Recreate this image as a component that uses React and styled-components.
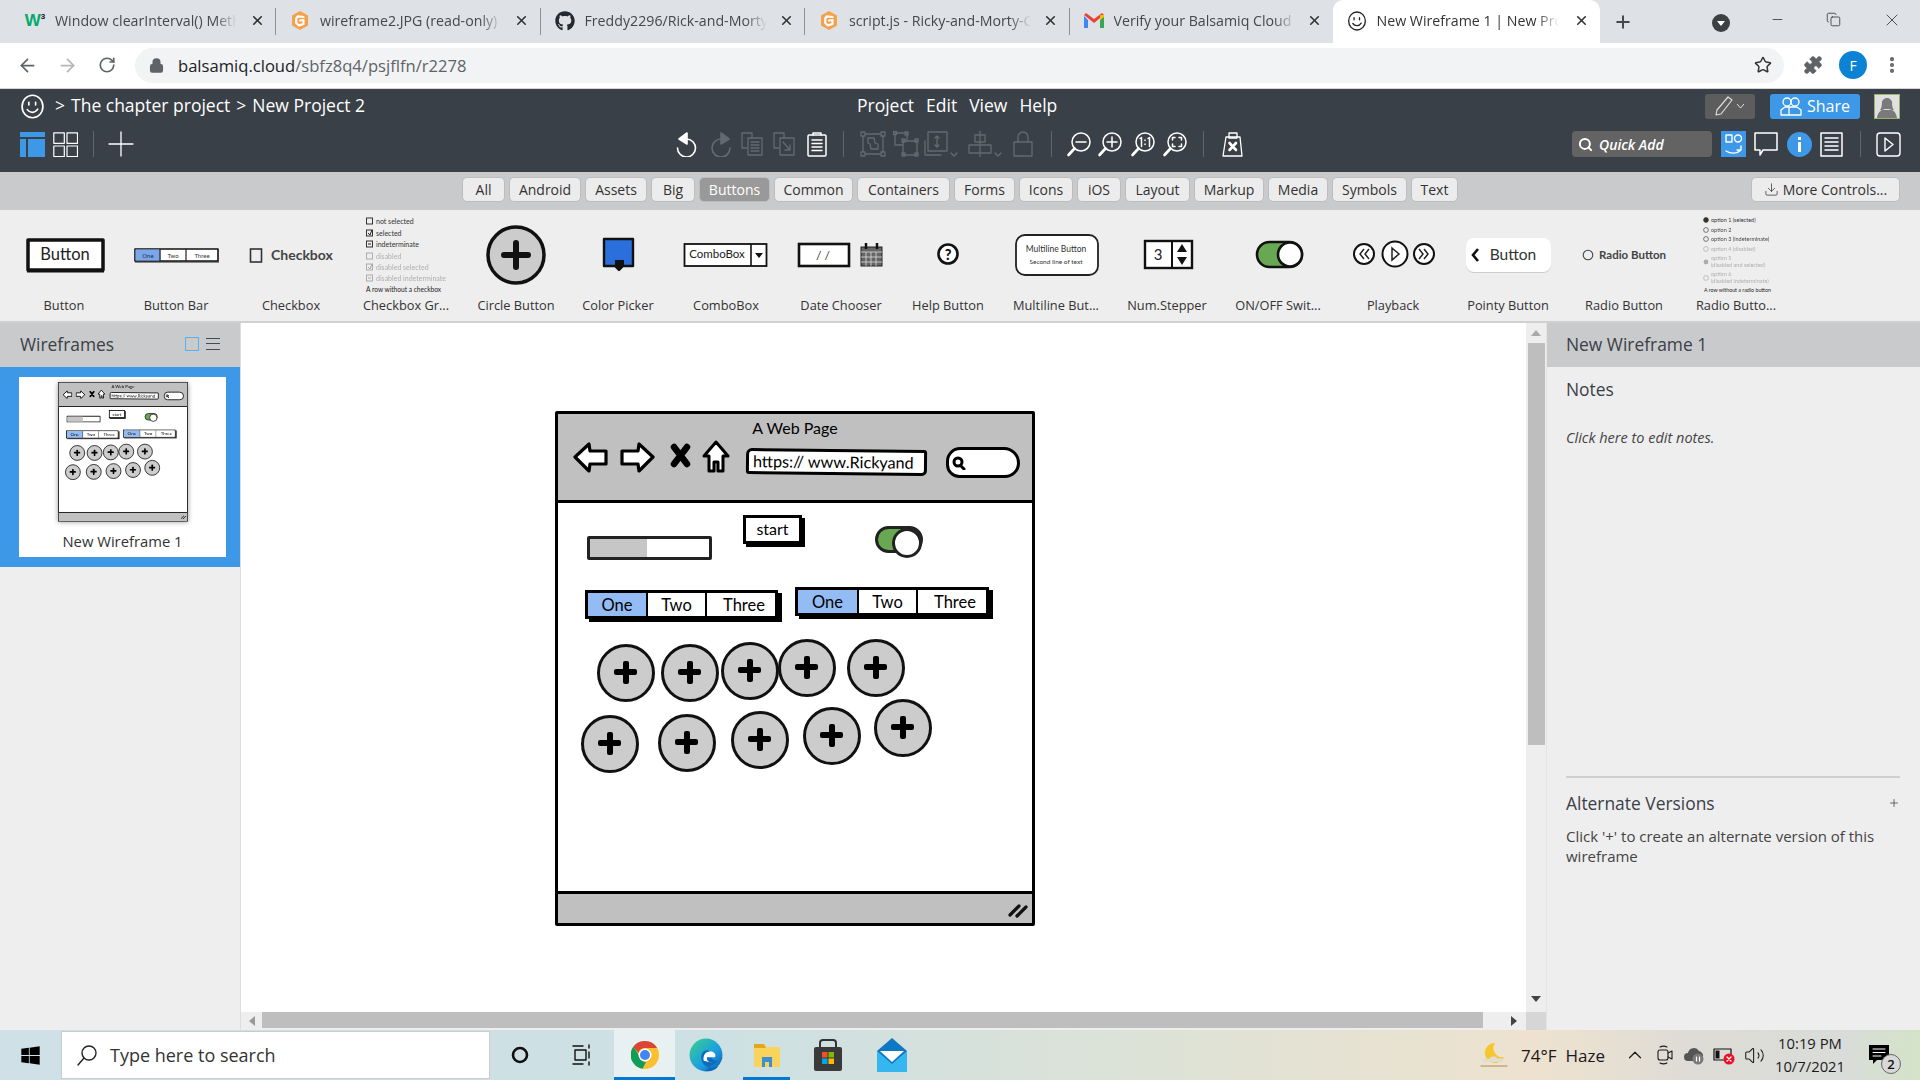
import React from 'react';
import styled, { createGlobalStyle } from 'styled-components';
import { ArrowLeft, ArrowRight, RotateCw, Lock, Star, Puzzle, EllipsisVertical, X, Plus, Minus, Copy, Search, ChevronUp, Volume2, Download } from 'lucide-react';
import { FaGithub, FaWindows } from 'react-icons/fa';

const UI = '"Open Sans", "Noto Sans", sans-serif';
const SK = 'Lato, "Open Sans", sans-serif';

const Global = createGlobalStyle`
  html, body { margin: 0; padding: 0; width: 1920px; height: 1080px; overflow: hidden; }
  body { font-family: ${UI}; background: #fff; }
  * { box-sizing: border-box; }
  svg { display: block; }
`;

const Page = styled.div`
  width: 1920px; height: 1080px; display: flex; flex-direction: column; overflow: hidden;
`;

/* Browser chrome */
const TabStrip = styled.div`
  height: 43px; background: #dee1e6; display: flex; align-items: stretch; padding-left: 11px; flex-shrink: 0;
`;
const Tab = styled.div`
  width: ${p => p.$w || 264}px; position: relative; display: flex; align-items: center; padding-left: 14px; padding-bottom: 2px;
  background: ${p => p.$active ? '#fff' : 'transparent'};
  border-radius: ${p => p.$active ? '10px 10px 0 0' : '0'};
  border-right: ${p => p.$sep ? '1px solid #8d9095' : '0'};
  ${p => p.$sep ? 'border-image: linear-gradient(#dee1e6 20%, #8d9095 20%, #8d9095 80%, #dee1e6 80%) 1;' : ''}
`;
const Favicon = styled.span`
  width: 20px; height: 20px; display: flex; align-items: center; justify-content: center; flex-shrink: 0;
`;
const W3 = styled.span`
  font: bold 17px "Liberation Sans", sans-serif; color: #04aa6d; line-height: 20px;
  sup { font-size: 8px; color: #111; vertical-align: top; line-height: 12px; }
`;
const TabTitle = styled.span`
  margin-left: 10px; width: 182px; font-size: 14.2px; color: ${p => p.$active ? '#333' : '#45484c'}; white-space: nowrap; overflow: hidden;
  -webkit-mask-image: linear-gradient(90deg, #000 88%, transparent 100%);
  mask-image: linear-gradient(90deg, #000 88%, transparent 100%);
`;
const TabClose = styled.span`
  width: 16px; display: flex; justify-content: center; margin-left: auto; margin-right: 10px; color: #333;
`;
const NewTab = styled.div`
  width: 52px; margin-left: -3px; display: flex; align-items: center; justify-content: center; color: #45484c;
`;
const WinControls = styled.div`
  margin-left: auto; display: flex; align-items: center; color: #333; padding-right: 18px; height: 39px;
`;
const Ctl = styled.div`
  width: ${p => p.$w}px; margin-left: ${p => p.$m || 0}px; margin-top: ${p => p.$t || 0}px; display: flex; justify-content: center; flex-shrink: 0;
`;
const AddressRow = styled.div`
  height: 46px; background: #fff; border-bottom: 1px solid #d3d5d8; display: flex; align-items: center; flex-shrink: 0; padding: 0 0 1px 7px;
`;
const NavBtn = styled.div`
  width: 40px; display: flex; justify-content: center; color: ${p => p.$dim ? '#b4b6b9' : '#5f6368'};
`;
const UrlPill = styled.div`
  margin-left: 8px; width: 1649px; height: 35px; background: #f1f3f4; border-radius: 18px; display: flex; align-items: center; padding: 0 12px 0 14px; color: #5f6368; font-size: 16.6px;
`;
const UrlHost = styled.span` color: #202124; margin-left: 14px; `;
const StarBox = styled.span` margin-left: auto; color: #333; `;
const ProfileDot = styled.div`
  width: 28px; height: 28px; border-radius: 50%; background: #0b82d4; color: #fff; font-size: 14px; display: flex; align-items: center; justify-content: center; margin-left: 16px;
`;
const AddrRight = styled.div`
  display: flex; align-items: center; margin-left: 19px; color: #5f6368;
`;
const DotsBox = styled.span` margin-left: 15px; `;

/* Balsamiq header */
const AppHeader = styled.div`
  height: 83px; background: #3a4047; color: #fff; flex-shrink: 0; display: flex; flex-direction: column;
`;
const HeadRow = styled.div`
  height: 34px; padding-bottom: 2px; display: grid; grid-template-columns: 857px auto 1fr; align-items: center;
`;
const Crumbs = styled.div`
  display: flex; align-items: center; padding-left: 20px; font-size: 17.5px; gap: 6px;
`;
const SmileBox = styled.span` margin: 2px 4px 0 0; `;
const Menu = styled.div`
  display: flex; gap: 12px; font-size: 17.5px;
`;
const HeadRight = styled.div`
  display: flex; align-items: center; justify-content: flex-end; padding-right: 20px; padding-top: 2px;
`;
const PenBtn = styled.div`
  width: 50px; height: 25px; background: #5d5d5d; border-radius: 3px; display: flex; align-items: center; justify-content: center; gap: 3px; color: #ddd;
`;
const ShareBtn = styled.div`
  width: 90px; height: 25px; margin-left: 15px; background: #3d99e8; border-radius: 3px; display: flex; align-items: center; justify-content: center; gap: 5px; font-size: 16px; color: #fff;
`;
const Avatar = styled.div`
  width: 26px; height: 25px; margin-left: 14px; background: #e0e0e0; border: 1px solid #9ab36f; overflow: hidden;
`;
const ToolRow = styled.div`
  height: 42px; display: grid; grid-template-columns: 670px auto 1fr; align-items: center;
`;
const ToolGroup = styled.div`
  display: flex; align-items: center; ${p => p.$end ? 'justify-content: flex-end; padding-right: 17px;' : ''}
  ${p => p.$pad ? `padding-left: ${p.$pad}px;` : ''}
`;
const Slot = styled.div`
  width: ${p => p.$w}px; display: flex; justify-content: center; align-items: center; color: ${p => p.$dim ? '#636a71' : '#fff'};
`;
const VDiv = styled.div`
  width: ${p => p.$w}px; height: 26px; position: relative; display: flex; justify-content: center;
  &::after { content: ''; width: 1px; height: 100%; background: #5f666d; }
`;
const QuickAdd = styled.div`
  width: 140px; height: 26px; background: #636363; border-radius: 4px; display: flex; align-items: center; padding-left: 6px; gap: 6px; font-size: 14px; font-style: italic; font-weight: 600; color: #fff; margin-right: 5px;
`;

/* filter tags */
const FilterBar = styled.div`
  height: 38px; background: #c9cacc; display: flex; align-items: center; padding-left: 462px; gap: 4px; flex-shrink: 0; padding-bottom: 3px;
`;
const Tag = styled.div`
  width: ${p => p.$w}px; height: 25px; border-radius: 5px; border: 1px solid #bcbdbf; background: ${p => p.$on ? '#999' : '#ececec'}; color: ${p => p.$on ? '#fff' : '#333'}; font-size: 14px; display: flex; align-items: center; justify-content: center; white-space: nowrap; gap: 4px;
`;
const TagEnd = styled(Tag)` margin-left: auto; margin-right: 20px; `;

/* library */
const Library = styled.div`
  height: 113px; background: #eee; border-bottom: 2px solid #d0d0d0; display: flex; padding-left: 10px; flex-shrink: 0;
`;
const LibItem = styled.div`
  width: ${p => p.$w}px; display: flex; flex-direction: column; align-items: center; flex-shrink: 0; padding-top: 2px;
`;
const LibLabel = styled.div`
  font-size: 12.8px; color: #333; line-height: 18px; margin-top: -2px; white-space: nowrap;
`;

/* main */
const Main = styled.div`
  flex: 1; display: grid; grid-template-columns: 241px 1fr 374px; min-height: 0;
`;
const Sidebar = styled.div`
  background: #eee; border-right: 1px solid #ddd; display: flex; flex-direction: column;
`;
const PanelHead = styled.div`
  height: 44px; background: #c9cacc; display: flex; align-items: center; padding: 0 20px 2px ${p => p.$left || 20}px; font-size: 17.4px; color: #3a4047;
`;
const HeadIcons = styled.div`
  margin-left: auto; display: flex; align-items: center; gap: 7px;
`;
const SquareIco = styled.div`
  width: 14px; height: 14px; border: 1px solid #5ab0f0;
`;
const Burger = styled.div`
  width: 14px; height: 12px; border-top: 1.5px solid #454b52; border-bottom: 1.5px solid #454b52; position: relative;
  &::after { content: ''; position: absolute; left: 0; right: 0; top: 3.5px; height: 1.5px; background: #454b52; }
`;
const Selected = styled.div`
  height: 200px; background: #3d99e8; padding: 10px 14px 10px 19px;
`;
const ThumbCard = styled.div`
  height: 180px; background: #fff; display: flex; flex-direction: column; align-items: center; padding-top: 5px;
`;
const ThumbBox = styled.div`
  width: 130px; height: 139px; box-shadow: 0 1px 5px rgba(0,0,0,.4);
`;
const ThumbScale = styled.div`
  width: 480px; transform: scale(.2708); transform-origin: 0 0; filter: blur(.9px);
`;
const ThumbLabel = styled.div`
  margin-top: 10px; font-size: 14.8px; color: #333;
`;
const CanvasArea = styled.div`
  display: grid; grid-template-columns: 1fr 20px; grid-template-rows: 1fr 18px; min-height: 0; background: #fff;
`;
const Canvas = styled.div`
  padding: 88px 0 0 314px; overflow: hidden; background: #fff;
`;
const VScroll = styled.div`
  background: #eee; display: flex; flex-direction: column; align-items: center; padding: 0 1px 4px;
`;
const HScroll = styled.div`
  background: #eee; display: flex; align-items: center; padding-right: 3px;
`;
const ThumbV = styled.div`
  width: 17px; height: 402px; background: #bebebe;
`;
const ThumbH = styled.div`
  width: 1221px; height: 16px; background: #bebebe; margin-top: -2px;
`;
const ArrowBox = styled.div`
  width: ${p => p.$w}px; height: ${p => p.$h}px; display: flex; align-items: center; justify-content: center; flex-shrink: 0;
  ${p => p.$auto ? 'margin-top: auto;' : ''} ${p => p.$autoL ? 'margin-left: auto;' : ''}
`;
const Corner = styled.div` background: #d6d6d6; `;
const RightPanel = styled.div`
  background: #eee; display: flex; flex-direction: column; border-left: 1px solid #e4e4e4;
`;
const NotesSec = styled.div`
  height: 409px; padding: 0 19px; flex-shrink: 0;
`;
const SecTitle = styled.div`
  font-size: 17.4px; color: #3a4047; line-height: 26px; display: flex; justify-content: space-between; align-items: center;
`;
const NoteTitle = styled(SecTitle)` margin-top: 9px; `;
const NoteHint = styled.div`
  font-size: 14.5px; font-style: italic; color: #444; margin-top: 26px; line-height: 20px;
`;
const AltSec = styled.div`
  margin: 0 20px 0 19px; border-top: 2px solid #cfcfcf; padding-top: 12px;
`;
const AltText = styled.div`
  font-size: 15px; color: #444; line-height: 20px; margin-top: 10px; width: 334px;
`;

/* the wireframe */
const Frame = styled.div`
  width: 480px; height: 515px; border: 3px solid #000; border-radius: 2px; background: #fff; position: relative; display: flex; flex-direction: column; font-family: ${SK}; color: #000;
`;
const TitleBar = styled.div`
  height: 89px; background: #c0c0c0; border-bottom: 3.5px solid #000; text-align: center; font-size: 16px; line-height: 20px; padding-top: 4px;
`;
const WBody = styled.div` flex: 1; `;
const StatusBar = styled.div`
  height: 32px; background: #c0c0c0; border-top: 3px solid #000; display: flex; justify-content: flex-end; align-items: center; padding: 2px 4px 0 0;
`;
const Node = styled.div`
  position: absolute; left: ${p => p.$x}px; top: ${p => p.$y}px;
`;
const UrlBox = styled(Node)`
  width: 181px; height: 26px; background: #fff; border: 3px solid #000; border-radius: 6px 3px 5px 3px; font-size: 16.2px; line-height: 19px; padding-left: 4px; white-space: nowrap; overflow: hidden; transform: rotate(.6deg);
`;
const SearchPill = styled(Node)`
  width: 74px; height: 31px; background: #fff; border: 3.5px solid #000; border-radius: 16px 18px 17px 15px; display: flex; align-items: center; padding-left: 3px;
`;
const Progress = styled(Node)`
  width: 125px; height: 24px; border: 3px solid #222; border-radius: 2px; background: #fff;
  &::before { content: ''; display: block; height: 100%; width: 48%; background: #c6c6c6; }
`;
const StartBtn = styled(Node)`
  width: 59px; height: 29px; background: #fff; border: 3px solid #000; box-shadow: 3px 3px 0 #000; font-size: 16px; display: flex; align-items: center; justify-content: center; padding-bottom: 3px;
`;
const Toggle = styled(Node)`
  width: 48px; height: 27px; border: 3px solid #222; border-radius: 14px; background: #68a853; display: flex; justify-content: flex-end;
  &::after { content: ''; width: 24px; height: 24px; margin: -1.5px -2px 0 0; border: 3px solid #222; border-radius: 50%; background: #fff; }
`;
const BBar = styled(Node)`
  width: ${p => p.$w}px; height: 29px; display: flex; border: 3px solid #000; background: #fff; box-shadow: 4px 3px 0 #000; font-size: 16.5px;
`;
const BSeg = styled.div`
  flex: ${p => p.$grow ? 1 : `0 0 ${p.$w}px`}; background: ${p => p.$on ? '#94bcf4' : '#fff'}; border-right: ${p => p.$grow ? 0 : 2}px solid #000; display: flex; align-items: center; justify-content: center; line-height: 1; padding: 2px 0 0 ${p => p.$grow ? 6 : 0}px;
`;
const CircleBtn = styled(Node)`
  width: 58px; height: 58px; border: 3.5px solid #111; border-radius: 50%; background: #ccc;
  &::before, &::after { content: ''; position: absolute; background: #000; border-radius: 2px; }
  &::before { left: 14px; top: 22px; width: 23px; height: 6px; }
  &::after { left: 22.5px; top: 13.5px; width: 6px; height: 23px; }
`;

const Ico = ({ s = 24, w, h, vb, sw = 1.5, fill = 'none', stroke = 'currentColor', children }) => (
  <svg width={w || s} height={h || s} viewBox={vb || `0 0 ${w || s} ${h || s}`} fill={fill} stroke={stroke} strokeWidth={sw} strokeLinecap="round" strokeLinejoin="round">{children}</svg>
);

const Smiley = ({ s = 22, c = '#fff' }) => (
  <Ico s={s} vb="0 0 24 24" sw={1.6} stroke={c}>
    <ellipse cx="12" cy="12" rx="10" ry="10.8" />
    <path d="M8.5 8v2.5M15 8v2.5M7 15c2.5 3.5 7.5 3.5 10 -.5" />
  </Ico>
);
const GFav = () => (
  <Ico s={21} vb="0 0 20 20" sw={0}>
    <path d="M10 .5 18 5v10l-8 4.5L2 15V5z" fill="#f5a04a" />
    <path d="M13.5 6.5 8 5.8 6.2 8v4.5L9 15l4.5-1.6V9.5L10 10" fill="none" stroke="#fff" strokeWidth="2.2" />
  </Ico>
);
const Gmail = () => (
  <Ico w={20} h={16} vb="0 0 20 16" sw={0}>
    <path d="M0 3v12h4V7z" fill="#4285f4" /><path d="M20 3v12h-4V7z" fill="#34a853" />
    <path d="M0 2l10 8 10-8-2-2-8 6-8-6z" fill="#ea4335" /><path d="M16 2l4 0v2l-4 3z" fill="#fbbc05" />
  </Ico>
);

const tabs = [
  ['w3', 'Window clearInterval() Method'],
  ['g', 'wireframe2.JPG (read-only) - Goo'],
  ['gh', 'Freddy2296/Rick-and-Morty-App'],
  ['g', 'script.js - Ricky-and-Morty-Game'],
  ['gm', 'Verify your Balsamiq Cloud account'],
];
const fav = k => k === 'w3' ? <W3>W<sup>3</sup></W3> : k === 'g' ? <GFav /> : k === 'gh' ? <FaGithub size={20} color="#24292e" /> : <Gmail />;

const filters = [['All',43],['Android',72],['Assets',62],['Big',44],['Buttons',71],['Common',79],['Containers',93],['Forms',61],['Icons',54],['iOS',44],['Layout',65],['Markup',70],['Media',60],['Symbols',75],['Text',47]];

const P = ({ x, w, children }) => (
  <svg width={w} height={86} viewBox={`${x} 212 ${w} 86`} fontFamily={SK}>{children}</svg>
);
const Sk = { stroke: '#111', strokeLinejoin: 'round' };

const libs = [
  ['Button', 10, 108, <>
    <rect x="28" y="240" width="75" height="30" fill="#fff" {...Sk} strokeWidth="3.5" />
    <path d="M27 271h77" stroke="#111" strokeWidth="3" />
    <text x="65" y="260" fontSize="16.5" textAnchor="middle" fill="#222">Button</text></>],
  ['Button Bar', 118, 116, <>
    <rect x="135" y="249" width="83" height="12" fill="#fff" {...Sk} strokeWidth="1.6" />
    <rect x="135.5" y="249.5" width="25" height="11" fill="#79a7ea" />
    <path d="M160 249v12M186 249v12M135 262h84" stroke="#222" strokeWidth="1.2" />
    <text x="148" y="258" fontSize="6" textAnchor="middle" fill="#234">One</text>
    <text x="173" y="258" fontSize="6" textAnchor="middle" fill="#333">Two</text>
    <text x="202" y="258" fontSize="6" textAnchor="middle" fill="#333">Three</text></>],
  ['Checkbox', 234, 114, <>
    <rect x="250.5" y="249" width="11" height="13" fill="#eee" stroke="#333" strokeWidth="1.6" />
    <text x="271" y="260" fontSize="14" fontWeight="700" fill="#444">Checkbox</text></>],
  ['Checkbox Gr...', 348, 116, <>
    {[['not selected',221,1],['selected',233,1],['indeterminate',244,1],['disabled',256,.35],['disabled selected',267,.35],['disabled indeterminate',278,.35]].map(([t,y,o]) => (
      <g key={t} opacity={o}>
        <rect x="366.5" y={y-3} width="6" height="6" fill="none" stroke="#333" />
        {t.includes('selected') && t !== 'not selected' && <path d={`M368 ${y}l2 2 2-5`} stroke="#222" fill="none" />}
        {t.includes('indeterm') && <path d={`M368 ${y}h3`} stroke="#222" />}
        <text x="376" y={y+2.5} fontSize="7" fill="#333">{t}</text>
      </g>
    ))}
    <text x="366" y="291.5" fontSize="6.6" fill="#222">A row without a checkbox</text></>],
  ['Circle Button', 464, 104, <>
    <circle cx="516" cy="255" r="28" fill="#ccc" stroke="#111" strokeWidth="3.5" />
    <path d="M504 255h24M516 243v24" stroke="#111" strokeWidth="6" strokeLinecap="round" /></>],
  ['Color Picker', 568, 100, <>
    <path d="M604 239h29v27h-10l-4 4-4-4h-11z" fill="#2a6fdb" stroke="#111" strokeWidth="2.4" strokeLinejoin="round" />
    <path d="M615 260h9v6l-4 4-5-4z" fill="#111" /></>],
  ['ComboBox', 668, 116, <>
    <rect x="684.5" y="244" width="82" height="22" fill="#fff" stroke="#111" strokeWidth="1.8" />
    <path d="M751 244v22" stroke="#111" strokeWidth="1.6" />
    <path d="M755 253h8l-4 5z" fill="#111" />
    <text x="717" y="258" fontSize="11.5" textAnchor="middle" fill="#222">ComboBox</text></>],
  ['Date Chooser', 784, 114, <>
    <rect x="799" y="244" width="50" height="22" fill="#fff" stroke="#111" strokeWidth="2.6" />
    <text x="816" y="260" fontSize="12" fill="#333">/ /</text>
    <rect x="861" y="247" width="21" height="19" fill="#666" stroke="#222" />
    <path d="M861 252h21M866 252v14M871 252v14M876 252v14M861 257h21M861 262h21" stroke="#ddd" strokeWidth=".8" />
    <path d="M866 243v6M877 243v6" stroke="#111" strokeWidth="2.5" /></>],
  ['Help Button', 898, 100, <>
    <circle cx="948" cy="254" r="9.5" fill="#fff" stroke="#111" strokeWidth="2.6" />
    <text x="948" y="259.5" fontSize="14.5" fontWeight="900" textAnchor="middle" fill="#111">?</text></>],
  ['Multiline But...', 998, 116, <>
    <rect x="1016" y="235" width="82" height="40" rx="9" fill="#fff" stroke="#222" strokeWidth="1.8" />
    <text x="1056" y="252" fontSize="8.5" textAnchor="middle" fill="#333">Multiline Button</text>
    <text x="1056" y="264" fontSize="6.5" textAnchor="middle" fill="#333">Second line of text</text></>],
  ['Num.Stepper', 1114, 106, <>
    <rect x="1145" y="241" width="47" height="27" fill="#fff" stroke="#111" strokeWidth="2.4" />
    <path d="M1172 241v27" stroke="#111" strokeWidth="2" />
    <path d="M1182 244l5 8h-10zM1182 265l5-8h-10z" fill="#111" />
    <text x="1158" y="260" fontSize="15" textAnchor="middle" fill="#222">3</text></>],
  ['ON/OFF Swit...', 1220, 116, <>
    <rect x="1257" y="242" width="45" height="25" rx="12.5" fill="#68a853" stroke="#111" strokeWidth="2.6" />
    <circle cx="1290" cy="254.5" r="12" fill="#fff" stroke="#111" strokeWidth="2.6" /></>],
  ['Playback', 1336, 114, <>
    <circle cx="1364" cy="254" r="10" fill="#fff" stroke="#111" strokeWidth="2" />
    <circle cx="1395" cy="254" r="12.5" fill="#fff" stroke="#111" strokeWidth="2" />
    <circle cx="1424" cy="254" r="10" fill="#fff" stroke="#111" strokeWidth="2" />
    <path d="M1364 249l-4 5 4 5M1369 249l-4 5 4 5M1392 248l7 6-7 6zM1419 249l4 5-4 5M1424 249l4 5-4 5" fill="none" stroke="#222" strokeWidth="1.5" /></>],
  ['Pointy Button', 1450, 116, <>
    <rect x="1466" y="239" width="85" height="34" rx="8" fill="#ccc" />
    <rect x="1466" y="238" width="85" height="34" rx="8" fill="#fff" />
    <path d="M1478 249l-5 6 5 6" fill="none" stroke="#111" strokeWidth="2.6" />
    <text x="1513" y="260" fontSize="15.5" textAnchor="middle" fill="#333">Button</text></>],
  ['Radio Button', 1566, 116, <>
    <circle cx="1588" cy="255" r="4.8" fill="none" stroke="#444" strokeWidth="1.1" />
    <text x="1599" y="259" fontSize="11.5" fontWeight="700" fill="#444">Radio Button</text></>],
  ['Radio Butto...', 1682, 108, <>
    {[['option 1 (selected)',220,1],['option 2',230,.9],['option 3 (indeterminate)',239,.9],['option 4 (disabled)',249,.35]].map(([t,y,o]) => (
      <g key={t} opacity={o}><circle cx="1706" cy={y} r="2.4" fill={y === 220 ? '#333' : 'none'} stroke="#333" strokeWidth=".7" />
      <text x="1711" y={y+2} fontSize="5.5" fill="#333">{t}</text></g>
    ))}
    <g opacity=".35"><circle cx="1706" cy="262" r="2.4" fill="#333" /><text x="1711" y="260" fontSize="5.5" fill="#333">option 5</text><text x="1711" y="267" fontSize="5.5" fill="#333">(disabled and selected)</text>
    <circle cx="1706" cy="278" r="2.4" fill="none" stroke="#333" strokeWidth=".7" /><text x="1711" y="276" fontSize="5.5" fill="#333">option 6</text><text x="1711" y="283" fontSize="5.5" fill="#333">(disabled indeterminate)</text></g>
    <text x="1704" y="292" fontSize="5.3" fill="#222">A row without a radio button</text></>],
];

const circles = [[39,230],[103,230],[163,228],[220,225],[289,225],[23,301],[100,300],[173,297],[245,293],[316,285]];

const Wireframe = () => (
  <Frame>
    <TitleBar>A Web Page</TitleBar>
    <WBody />
    <StatusBar>
      <Ico w={20} h={16} vb="0 0 20 16" sw={3.2} stroke="#111"><path d="M2 13 11 4M9 14 18 5" /></Ico>
    </StatusBar>
    <Node $x={15} $y={27}><Ico w={35} h={32} sw={3.2} fill="#fff" stroke="#000"><path d="M2 16 16 3l1 7h16v13H17l-1 7z" /></Ico></Node>
    <Node $x={62} $y={27}><Ico w={35} h={32} sw={3.2} fill="#fff" stroke="#000"><path d="M33 16 19 3l-1 7H2v13h16l1 7z" /></Ico></Node>
    <Node $x={112} $y={29}><Ico w={21} h={25} sw={6.5} stroke="#000"><path d="M4 4l13 17M17 4 4 21" /></Ico></Node>
    <Node $x={144} $y={26}><Ico w={28} h={33} sw={3} fill="#fff" stroke="#000"><path d="M14 2 26 16h-5v15h-5v-9h-4v9H7V16H2z" /></Ico></Node>
    <UrlBox $x={188} $y={35}>https:// www.Rickyand</UrlBox>
    <SearchPill $x={388} $y={33}><Ico s={14} sw={3} stroke="#000"><circle cx="6" cy="6" r="4" /><path d="M9 10l3 3" /></Ico></SearchPill>
    <Progress $x={29} $y={122} />
    <StartBtn $x={185} $y={101}>start</StartBtn>
    <Toggle $x={317} $y={112} />
    <BBar $w={193} $x={27} $y={176}><BSeg $on $w={60}>One</BSeg><BSeg $w={59}>Two</BSeg><BSeg $grow>Three</BSeg></BBar>
    <BBar $w={194} $x={237} $y={173}><BSeg $on $w={61}>One</BSeg><BSeg $w={59}>Two</BSeg><BSeg $grow>Three</BSeg></BBar>
    {circles.map(([x, y], i) => <CircleBtn key={i} $x={x} $y={y} />)}
  </Frame>
);

const Doc = ({ d }) => <Ico s={26} vb="0 0 26 26" sw={1.3}><path d="M3 2h10v5M3 2v15h5" /><rect x="9" y="7" width="14" height="17" />{d}</Ico>;
const Mag = ({ children }) => (
  <Ico s={26} vb="0 0 26 26" sw={1.5}><circle cx="15" cy="11" r="9" /><path d="M8.5 17.5 2.5 24" strokeWidth="2.6" />{children}</Ico>
);
const Caret = () => <svg width="9" height="6" viewBox="0 0 9 6" fill="none" stroke="currentColor"><path d="M1 1l3.5 4L8 1" /></svg>;

const ToolBar = () => (
  <ToolRow>
    <ToolGroup $pad={20}>
      <Ico w={25} h={25} sw={0}><path d="M0 0h25v5H0zM0 7h6v18H0zM8 7h17v18H8z" fill="#3d99e8" /></Ico>
      <Slot $w={8} />
      <Ico w={25} h={25} sw={1.2}><rect x=".8" y=".8" width="10.5" height="10.5" /><rect x="14" y=".8" width="10.5" height="10.5" /><rect x=".8" y="14" width="10.5" height="10.5" /><rect x="14" y="14" width="10.5" height="10.5" /></Ico>
      <VDiv $w={30} />
      <Slot $w={26}><Ico s={26} sw={1.3}><path d="M13 1v24M1 13h24" /></Ico></Slot>
    </ToolGroup>
    <ToolGroup>
      <Slot $w={33}><Ico s={26} vb="0 0 26 26" sw={1.6}><path d="M13 2 5 8l8 5z" fill="currentColor" /><path d="M13 8a9 9 0 1 1-9.5 9" /></Ico></Slot>
      <Slot $w={33} $dim><Ico s={26} vb="0 0 26 26" sw={1.6}><path d="M14 2l8 6-8 5z" fill="currentColor" /><path d="M14 8a9 9 0 1 0 9 9" /></Ico></Slot>
      <Slot $w={31} $dim><Doc d={<path d="M12 11h8M12 14h8M12 17h8M12 20h8" />} /></Slot>
      <Slot $w={33} $dim><Doc d={<path d="M12 11l7 8M19 14v5h-5" />} /></Slot>
      <Slot $w={33}><Ico s={26} vb="0 0 26 26" sw={1.5}><rect x="4" y="4" width="18" height="21" rx="1" /><path d="M9 4V2h8v2M8 9h10M8 12.5h10M8 16h10M8 19.5h10" /></Ico></Slot>
      <VDiv $w={20} />
      <Slot $w={40} $dim><Ico s={26} vb="0 0 26 26" sw={1.3}><rect x="3" y="3" width="20" height="20" /><path d="M8 7h6l1 5 3 1v5h-7l-1-5-2-1z" /><rect x="1" y="1" width="4" height="4" fill="#3a4047" /><rect x="21" y="1" width="4" height="4" fill="#3a4047" /><rect x="1" y="21" width="4" height="4" fill="#3a4047" /><rect x="21" y="21" width="4" height="4" fill="#3a4047" /></Ico></Slot>
      <Slot $w={26} $dim><Ico s={26} vb="0 0 26 26" sw={1.3}><rect x="2" y="2" width="12" height="12" /><rect x="10" y="10" width="14" height="14" fill="#3a4047" /><rect x="0.5" y="0.5" width="3" height="3" /><rect x="12" y="1" width="3" height="3" /><rect x="9" y="8" width="3" height="3" /><rect x="22" y="8" width="3" height="3" /><rect x="9" y="22" width="3" height="3" /><rect x="22" y="22" width="3" height="3" /></Ico></Slot>
      <Slot $w={42} $dim><Ico w={36} h={26} vb="0 0 36 26" sw={1.3}><path d="M3 10v14h16" /><rect x="6" y="1" width="19" height="19" /><path d="M15 5v11M13 7l2-2 2 2M13 14l2 2 2-2M29 22l3 3 3-3" /></Ico></Slot>
      <Slot $w={48} $dim><Ico w={36} h={26} vb="0 0 36 26" sw={1.3}><rect x="8" y="4" width="10" height="7" /><rect x="2" y="14" width="22" height="8" /><path d="M13 0v26M28 22l3 3 3-3" /></Ico></Slot>
      <Slot $w={28} $dim><Ico s={26} vb="0 0 26 26" sw={1.3}><rect x="4" y="11" width="18" height="14" /><path d="M8 11V6a5 5 0 0 1 10 0v5" /></Ico></Slot>
      <VDiv $w={28} />
      <Slot $w={28}><Mag><path d="M10 11h10" /></Mag></Slot>
      <Slot $w={34}><Mag><path d="M10 11h10M15 6v10" /></Mag></Slot>
      <Slot $w={32}><Mag><path d="M10 7.5l1.5-1v9M15 9v.5M15 13v.5M18 7.5l1.5-1v9" strokeWidth="1.5" /></Mag></Slot>
      <Slot $w={32}><Mag><path d="M10.5 9V6.5H13M17 6.5h2.5V9M19.5 13v2.5H17M13 15.5h-2.5V13" /></Mag></Slot>
      <VDiv $w={25} />
      <Slot $w={34}><Ico s={26} vb="0 0 26 26" sw={1.3}><path d="M6 6h14l2 19H3z" /><rect x="9" y="2" width="8" height="5" /><path d="M9.5 12l6.5 7M16 12l-6.5 7" strokeWidth="2.6" /></Ico></Slot>
    </ToolGroup>
    <ToolGroup $end>
      <QuickAdd><Search size={15} strokeWidth={3.2} /><span>Quick Add</span></QuickAdd>
      <Slot $w={32}>
        <Ico w={25} h={26} sw={1.4}><rect x="0" y="0" width="25" height="26" fill="#3d99e8" stroke="none" /><rect x="5" y="4" width="6" height="7" /><circle cx="17" cy="7.5" r="3.5" /><path d="M5 20c5 3 11 3 15-1M20 15v4h-4" /></Ico>
      </Slot>
      <Slot $w={34}><Ico s={26} vb="0 0 26 26" sw={1.5}><path d="M2 2h22v17H10l-3 5v-5H2z" /></Ico></Slot>
      <Slot $w={32}>
        <Ico s={25} sw={0}><circle cx="12.5" cy="12.5" r="12.5" fill="#3d99e8" /><path d="M11 5h3v3h-3zM11 10h3v10h-3z" fill="#fff" /></Ico>
      </Slot>
      <Slot $w={32}><Ico s={25} sw={1.5}><rect x="2" y="1" width="21" height="23" /><path d="M6 6h13M6 10h13M6 14h13M6 18h13" /></Ico></Slot>
      <VDiv $w={26} />
      <Slot $w={30}><Ico s={25} sw={1.4}><rect x="1" y="1" width="23" height="23" rx="3" /><path d="M9 6l8 6.5L9 19z" /></Ico></Slot>
    </ToolGroup>
  </ToolRow>
);

const Taskbar = styled.div`
  height: 50px; flex-shrink: 0; display: flex; align-items: center; color: #111;
  background: linear-gradient(90deg, #cfe0e6 0%, #cde0e3 38%, #dde2d6 60%, #eee2cf 80%, #dedcd6 88%, #d9dcd9 96%, #d3e3c8 100%);
`;
const StartSlot = styled.div` width: 61px; display: flex; justify-content: center; `;
const SearchBox = styled.div`
  width: 429px; height: 48px; background: #fff; border: 1px solid #c8cccc; display: flex; align-items: center; padding-left: 14px; gap: 12px; font-size: 18px; color: #333;
`;
const TaskSlot = styled.div`
  width: ${p => p.$w || 61}px; height: 50px; display: flex; align-items: center; justify-content: center; position: relative;
  background: ${p => p.$active ? 'rgba(255,255,255,.55)' : 'transparent'};
  &::after { content: ''; display: ${p => p.$line ? 'block' : 'none'}; position: absolute; left: ${p => p.$active ? 0 : 7}px; right: ${p => p.$active ? 0 : 7}px; bottom: 0; height: 3px; background: #0078d4; }
`;
const Tray = styled.div`
  margin-left: auto; display: flex; align-items: center; height: 100%; font-size: 17px; color: #1a1a1a;
`;
const TrayText = styled.span` margin-left: ${p => p.$m}px; white-space: nowrap; `;
const Clock = styled.div`
  width: 80px; text-align: center; font-size: 14.8px; line-height: 23px; margin-left: 1px;
`;
const Notif = styled.div`
  width: 60px; display: flex; justify-content: center; position: relative; margin-right: 10px;
`;
const Badge = styled.span`
  position: absolute; left: 31px; top: 10px; width: 20px; height: 20px; border-radius: 50%; background: #d8d8d8; border: 1px solid #666; font-size: 13px; font-weight: 600; display: flex; align-items: center; justify-content: center; color: #111;
`;

export default function App() {
  return (
    <Page>
      <Global />
      <TabStrip>
        {tabs.map(([k, t], i) => (
          <Tab key={i} $w={i === 4 ? 263 : i === 0 ? 265 : 264.5} $sep={i < 4}>
            <Favicon>{fav(k)}</Favicon>
            <TabTitle>{t}</TabTitle>
            <TabClose><X size={15} strokeWidth={2.6} /></TabClose>
          </Tab>
        ))}
        <Tab $active $w={267}>
          <Favicon><Smiley s={20} c="#222" /></Favicon>
          <TabTitle $active>New Wireframe 1 | New Project 2</TabTitle>
          <TabClose><X size={15} strokeWidth={2.6} /></TabClose>
        </Tab>
        <NewTab><Plus size={20} strokeWidth={2.4} /></NewTab>
        <WinControls>
          <Ctl $w={20} $t={6}><Ico s={18} sw={0}><circle cx="9" cy="9" r="9" fill="#3c4043" /><path d="M5 7h8l-4 5z" fill="#fff" /></Ico></Ctl>
          <Ctl $w={20} $m={36}><Minus size={15} strokeWidth={1.3} /></Ctl>
          <Ctl $w={20} $m={36}><Copy size={15} strokeWidth={1.3} /></Ctl>
          <Ctl $w={20} $m={39}><X size={20} strokeWidth={1} /></Ctl>
        </WinControls>
      </TabStrip>
      <AddressRow>
        <NavBtn><ArrowLeft size={21} strokeWidth={2} /></NavBtn>
        <NavBtn $dim><ArrowRight size={21} strokeWidth={2} /></NavBtn>
        <NavBtn><RotateCw size={18} strokeWidth={2.2} /></NavBtn>
        <UrlPill>
          <Lock size={15} strokeWidth={3} fill="#5f6368" />
          <UrlHost>balsamiq.cloud</UrlHost>/sbfz8q4/psjflfn/r2278
          <StarBox><Star size={18} strokeWidth={2} /></StarBox>
        </UrlPill>
        <AddrRight>
          <Puzzle size={20} fill="#5f6368" strokeWidth={1} />
          <ProfileDot>F</ProfileDot>
          <DotsBox><EllipsisVertical size={20} strokeWidth={3} /></DotsBox>
        </AddrRight>
      </AddressRow>

      <AppHeader>
        <HeadRow>
          <Crumbs>
            <SmileBox><Smiley s={25} /></SmileBox>
            <span>&gt;</span><span>The chapter project</span>
            <span>&gt;</span><span>New Project 2</span>
          </Crumbs>
          <Menu><span>Project</span><span>Edit</span><span>View</span><span>Help</span></Menu>
          <HeadRight>
            <PenBtn>
              <Ico w={18} h={20} sw={1.2}><path d="M13 1l4 3L6 18l-5 1 1-5z" /></Ico><Caret />
            </PenBtn>
            <ShareBtn>
              <Ico w={22} h={20} sw={1.3}><circle cx="7" cy="6" r="4" /><circle cx="15" cy="6" r="4" /><path d="M1 19v-5l4-3h4v8zM9 19v-8h8l4 3v5z" /></Ico>
              Share
            </ShareBtn>
            <Avatar><Ico w={24} h={23} sw={0}><circle cx="12" cy="8" r="5" fill="#7a7a7a" /><path d="M2 23c1-7 5-9 10-9s9 2 10 9zM7 6c0 6-1 8-2 9h14c-1-1-2-3-2-9z" fill="#7a7a7a" /></Ico></Avatar>
          </HeadRight>
        </HeadRow>
        <ToolBar />
      </AppHeader>

      <FilterBar>
        {filters.map(([t, w]) => <Tag key={t} $w={w} $on={t === 'Buttons'}>{t}</Tag>)}
        <TagEnd $w={149}><Download size={15} strokeWidth={1.2} />More Controls...</TagEnd>
      </FilterBar>

      <Library>
        {libs.map(([t, x, w, d]) => (
          <LibItem key={t} $w={w}>
            <P x={x} w={w}>{d}</P>
            <LibLabel>{t}</LibLabel>
          </LibItem>
        ))}
      </Library>

      <Main>
        <Sidebar>
          <PanelHead>
            Wireframes
            <HeadIcons><SquareIco /><Burger /></HeadIcons>
          </PanelHead>
          <Selected>
            <ThumbCard>
              <ThumbBox><ThumbScale><Wireframe /></ThumbScale></ThumbBox>
              <ThumbLabel>New Wireframe 1</ThumbLabel>
            </ThumbCard>
          </Selected>
        </Sidebar>
        <CanvasArea>
          <Canvas><Wireframe /></Canvas>
          <VScroll>
            <ArrowBox $w={18} $h={20}><svg width="10" height="6"><path d="M5 0l5 6H0z" fill="#aaa" /></svg></ArrowBox>
            <ThumbV />
            <ArrowBox $w={18} $h={18} $auto><svg width="10" height="6"><path d="M0 0h10L5 6z" fill="#444" /></svg></ArrowBox>
          </VScroll>
          <HScroll>
            <ArrowBox $w={21} $h={18}><svg width="6" height="10"><path d="M6 0v10L0 5z" fill="#999" /></svg></ArrowBox>
            <ThumbH />
            <ArrowBox $w={18} $h={18} $autoL><svg width="6" height="10"><path d="M0 0v10l6-5z" fill="#444" /></svg></ArrowBox>
          </HScroll>
          <Corner />
        </CanvasArea>
        <RightPanel>
          <PanelHead $left={19}>New Wireframe 1</PanelHead>
          <NotesSec>
            <NoteTitle>Notes</NoteTitle>
            <NoteHint>Click here to edit notes.</NoteHint>
          </NotesSec>
          <AltSec>
            <SecTitle>Alternate Versions<Plus size={12} strokeWidth={1.5} /></SecTitle>
            <AltText>Click '+' to create an alternate version of this wireframe</AltText>
          </AltSec>
        </RightPanel>
      </Main>

      <Taskbar>
        <StartSlot><FaWindows size={21} color="#000" /></StartSlot>
        <SearchBox>
          <Ico s={22} sw={1.4} stroke="#222"><circle cx="13" cy="9" r="7" /><path d="M8 14 2 21" /></Ico>
          Type here to search
        </SearchBox>
        <TaskSlot $w={60}><Ico s={18} sw={2.6} stroke="#111"><circle cx="9" cy="9" r="7" /></Ico></TaskSlot>
        <TaskSlot $w={64}><Ico w={20} h={22} sw={1.4} stroke="#111"><rect x="3" y="6" width="11" height="10" /><path d="M1 2h10M1 20h10M17 1v3M17 8v6M17 18v3" /></Ico></TaskSlot>
        <TaskSlot $active $line>
          <Ico s={28} sw={0}>
            <circle cx="14" cy="14" r="14" fill="#fbc02d" />
            <path d="M14 0a14 14 0 0 1 12.1 7H14a7 7 0 0 0-6.7 5L2.4 5.6A14 14 0 0 1 14 0z" fill="#db4437" />
            <path d="M2.4 5.6 8 14.5a7 7 0 0 0 7 6.4L11.5 27.8A14 14 0 0 1 2.4 5.6z" fill="#0f9d58" />
            <circle cx="14" cy="14" r="6.5" fill="#fff" /><circle cx="14" cy="14" r="5" fill="#4285f4" />
          </Ico>
        </TaskSlot>
        <TaskSlot>
          <Ico s={34} vb="0 0 30 30" sw={0}>
            <defs><linearGradient id="edgeG" x1="0" y1="0" x2="1" y2="1"><stop offset="0" stopColor="#39d28c" /><stop offset=".6" stopColor="#1b9de2" /><stop offset="1" stopColor="#0c59a4" /></linearGradient></defs>
            <circle cx="15" cy="15" r="14.5" fill="url(#edgeG)" />
            <path d="M30 17c-1 3-6 4-9 2-3-3 0-6-4-8-4-1-7 3-6 8 1 6 8 9 15 6-3 4-8 5-12 4" fill="#0f6cbd" />
            <path d="M13 20c-1-5 2-9 7-8 3 1 4 3 3 5h-7c-1 3 2 5 5 5" fill="#fff" />
          </Ico>
        </TaskSlot>
        <TaskSlot $line>
          <Ico w={28} h={26} sw={0}>
            <path d="M1 2h10l3 3h13v20H1z" fill="#f9d45c" /><path d="M1 2h10l2 4H1z" fill="#e2a71d" />
            <path d="M9 25V15h10v10h-3v-5h-4v5z" fill="#3d8fd1" />
          </Ico>
        </TaskSlot>
        <TaskSlot>
          <Ico w={28} h={32} sw={0}>
            <path d="M6 8V4a3 3 0 0 1 3-3h10a3 3 0 0 1 3 3v4" fill="none" stroke="#333" strokeWidth="2" />
            <rect x="0" y="8" width="28" height="24" rx="2" fill="#3a3a3a" />
            <rect x="8" y="13" width="5.5" height="5.5" fill="#f25022" /><rect x="14.5" y="13" width="5.5" height="5.5" fill="#7fba00" />
            <rect x="8" y="19.5" width="5.5" height="5.5" fill="#00a4ef" /><rect x="14.5" y="19.5" width="5.5" height="5.5" fill="#ffb900" />
          </Ico>
        </TaskSlot>
        <TaskSlot $w={67}>
          <Ico w={30} h={34} sw={0}>
            <path d="M15 0 30 13v21H0V13z" fill="#0f78c4" />
            <path d="M3 13h24L15 24z" fill="#fff" />
            <path d="M0 13 15 26 30 13v21H0z" fill="#35b6ee" />
          </Ico>
        </TaskSlot>
        <Tray>
          <Ico w={30} h={28} sw={0}><path d="M15 2a10 10 0 1 0 9 14 9 9 0 0 1-9-14z" fill="#f7c52c" /><path d="M3 21h20a3 3 0 0 0-5-3 5 5 0 0 0-9 0 4 4 0 0 0-6 3z" fill="#dfdcd2" /><path d="M1 25h26" stroke="#c7a77a" strokeWidth="1.4" /></Ico>
          <TrayText $m={11}>74°F</TrayText>
          <TrayText $m={9}>Haze</TrayText>
          <Ctl $w={30} $m={15}><ChevronUp size={22} strokeWidth={1.3} /></Ctl>
          <Ctl $w={30}><Ico w={16} h={20} sw={1.1}><rect x="1" y="5" width="10" height="10" rx="2" /><path d="M11 8l4-2v8l-4-2M3 2c2-1 5-1 7 0M3 18c2 1 5 1 7 0" /></Ico></Ctl>
          <Ctl $w={30}><Ico w={24} h={20} sw={0}><path d="M5 16a4 4 0 0 1 0-8 6 6 0 0 1 11-2 5 5 0 0 1 4 6H10v4z" fill="#555" /><circle cx="15" cy="14" r="5.5" fill="#7a7a7a" /><path d="M13.5 12v4M16.5 12v4" stroke="#fff" strokeWidth="1.2" /></Ico></Ctl>
          <Ctl $w={29}><Ico w={24} h={20} sw={0}><rect x="1" y="4" width="17" height="11" fill="none" stroke="#111" strokeWidth="1.2" /><rect x="2.5" y="5.5" width="4" height="8" fill="#111" /><circle cx="16" cy="14" r="5.5" fill="#e81123" /><path d="M14 12l4 4M18 12l-4 4" stroke="#fff" strokeWidth="1.3" /></Ico></Ctl>
          <Ctl $w={30}><Volume2 size={21} strokeWidth={1.2} /></Ctl>
          <Clock>10:19 PM<br />10/7/2021</Clock>
          <Notif>
            <Ico w={22} h={22} sw={0}><path d="M0 1h20v15H8l-4 4v-4H0z" fill="#000" /><path d="M4 5h12M4 8.5h12M4 12h8" stroke="#fff" strokeWidth="1" /></Ico>
            <Badge>2</Badge>
          </Notif>
        </Tray>
      </Taskbar>
    </Page>
  );
}
